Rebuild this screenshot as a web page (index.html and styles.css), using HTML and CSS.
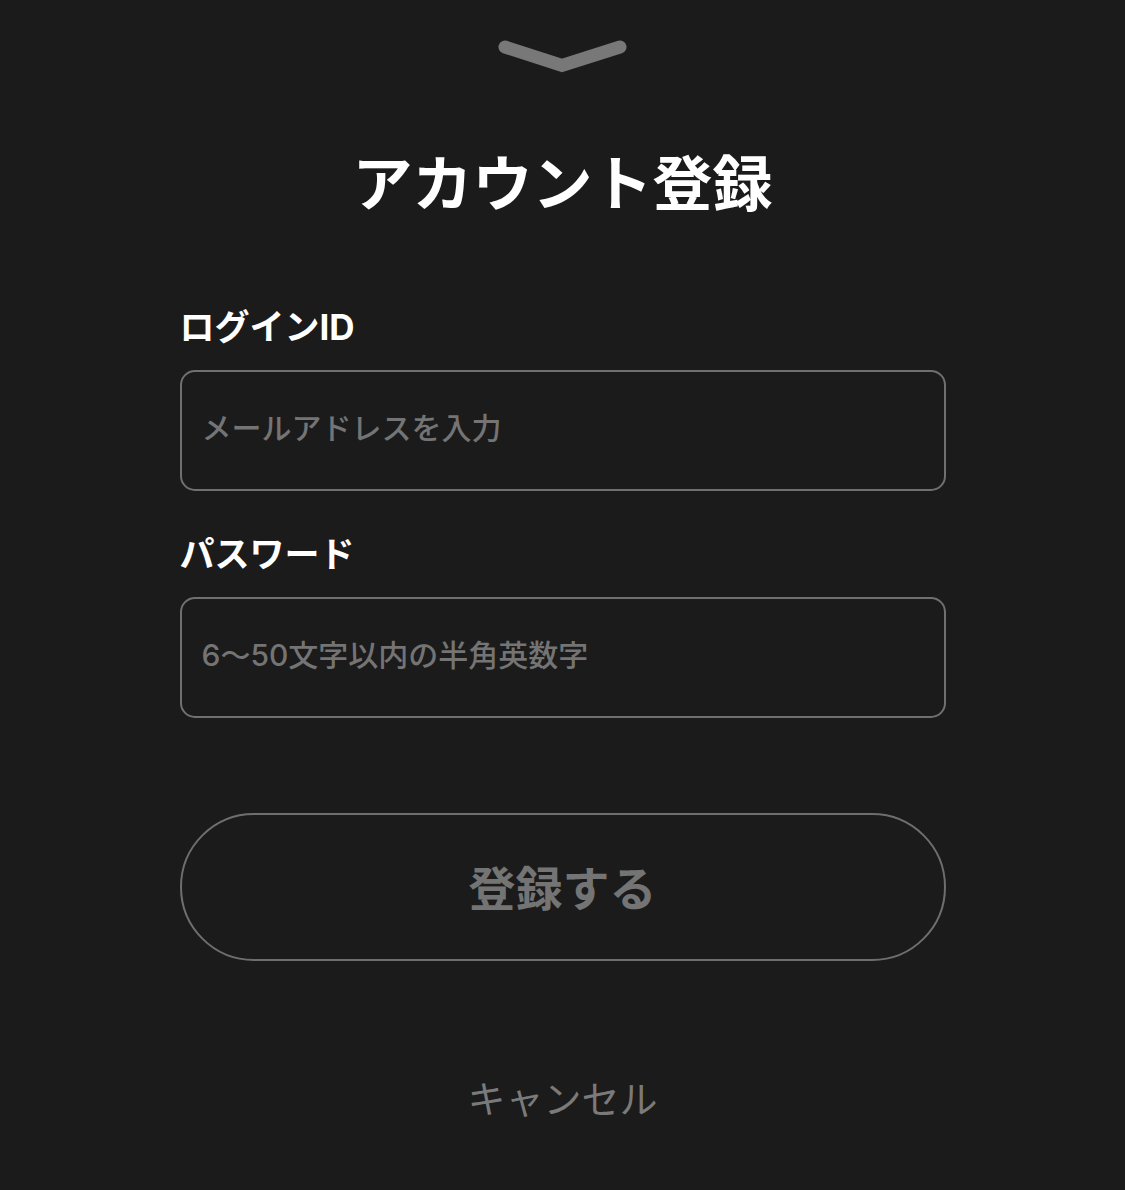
FILE: index.html
```html
<!DOCTYPE html>
<html lang="ja">
<head>
<meta charset="utf-8">
<title>アカウント登録</title>
<link rel="stylesheet" href="styles.css">
</head>
<body>
<div class="sheet">
  <div class="handle">
    <svg width="140" height="40" viewBox="0 0 140 40" aria-hidden="true">
      <path d="M12 11 L69 29.5 L127 11" fill="none" stroke="#787878" stroke-width="13" stroke-linecap="round" stroke-linejoin="miter"/>
    </svg>
  </div>
  <h1 class="title">アカウント登録</h1>
  <form class="form">
    <label class="label label-first" for="login">ログインID</label>
    <input class="field" id="login" type="text" placeholder="メールアドレスを入力">
    <label class="label label-second" for="pass">パスワード</label>
    <input class="field" id="pass" type="password" placeholder="6〜50文字以内の半角英数字">
    <button class="submit" type="button">登録する</button>
    <button class="cancel" type="button">キャンセル</button>
  </form>
</div>
</body>
</html>
```

FILE: styles.css
```css
* { box-sizing: border-box; }
html, body {
  margin: 0;
  padding: 0;
  background: #1b1b1b;
}
body {
  font-family: "Inter", "Noto Sans CJK JP", sans-serif;
  color: #ffffff;
  width: 1125px;
  height: 1190px;
  overflow: hidden;
}
.sheet {
  display: flex;
  flex-direction: column;
  align-items: center;
}
.handle {
  margin-top: 36px;
  height: 40px;
  display: flex;
  justify-content: center;
}
.handle svg { display: block; }
.title {
  margin: 68px 0 0;
  font-family: "Noto Sans CJK JP", sans-serif;
  font-size: 60px;
  line-height: 72px;
  font-weight: 700;
  color: #ffffff;
  letter-spacing: 0;
}
.form {
  width: 766px;
  display: flex;
  flex-direction: column;
}
.label {
  font-family: "Inter", "Noto Sans CJK JP", sans-serif;
  font-size: 35px;
  line-height: 42px;
  font-weight: 700;
  color: #ffffff;
}
.label-first { margin-top: 90px; }
.label-second { margin-top: 42px; }
.field {
  margin-top: 22px;
  width: 100%;
  height: 121px;
  border: 2.5px solid #707070;
  border-radius: 15px;
  background: transparent;
  padding: 0 20px 5px;
  font-family: "Inter", "Noto Sans CJK JP", sans-serif;
  font-size: 30px;
  font-weight: 500;
  color: #ffffff;
  outline: none;
}
.field::placeholder {
  color: #747474;
  opacity: 1;
}
.submit {
  margin-top: 95px;
  width: 100%;
  height: 148px;
  border: 2.5px solid #6e6e6e;
  border-radius: 74px;
  background: transparent;
  font-family: "Noto Sans CJK JP", sans-serif;
  font-size: 47px;
  font-weight: 700;
  color: #747474;
  padding: 0 0 4px;
}
.cancel {
  margin: 113px auto 0;
  border: none;
  background: transparent;
  padding: 0;
  font-family: "Noto Sans CJK JP", sans-serif;
  font-size: 38px;
  line-height: 46px;
  font-weight: 400;
  color: #7a7a7a;
}
```
